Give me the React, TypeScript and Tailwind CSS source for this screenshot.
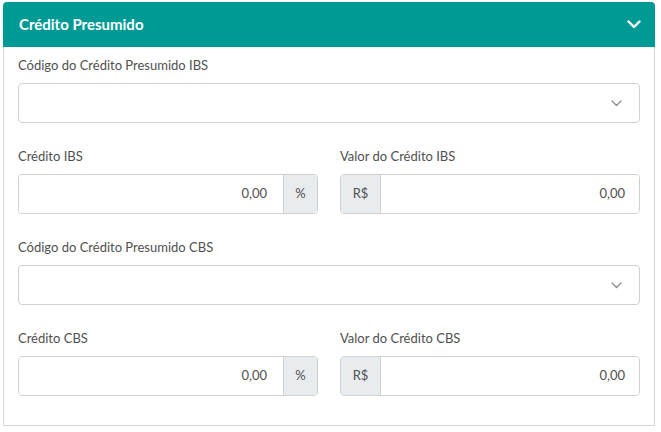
import React from 'react';

const font = { fontFamily: 'Lato, "Open Sans", sans-serif' };

function SelectChevron() {
  return (
    <svg width="11" height="7" viewBox="0 0 11 7" fill="none" aria-hidden="true">
      <path d="M1 1l4.5 4.5L10 1" stroke="#8a8a8a" strokeWidth="1.3" strokeLinecap="round" strokeLinejoin="round" />
    </svg>
  );
}

function Field({ label, children }: { label: string; children: React.ReactNode }) {
  return (
    <div className="flex flex-col">
      <label className="h-[18px] text-[13px] leading-[18px] text-[#505050] mb-[9px]">{label}</label>
      {children}
    </div>
  );
}

function SelectBox() {
  return (
    <div className="h-[40px] rounded-[4px] border border-[#d0d0d0] bg-white flex items-center justify-end pr-[17px]">
      <SelectChevron />
    </div>
  );
}

function PercentInput() {
  return (
    <div className="h-[40px] flex rounded-[4px] border border-[#d0d0d0] overflow-hidden">
      <div className="flex-1 flex items-center justify-end pr-[16px] text-[13px] text-[#505050] bg-white">0,00</div>
      <div className="w-[34px] flex items-center justify-center border-l border-[#d0d0d0] bg-[#e9ecef] text-[13px] text-[#505050]">%</div>
    </div>
  );
}

function MoneyInput() {
  return (
    <div className="h-[40px] flex rounded-[4px] border border-[#d0d0d0] overflow-hidden">
      <div className="w-[40px] flex items-center justify-center border-r border-[#d0d0d0] bg-[#e9ecef] text-[13px] text-[#505050]">R$</div>
      <div className="flex-1 flex items-center justify-end pr-[14px] text-[13px] text-[#505050] bg-white">0,00</div>
    </div>
  );
}

export default function App() {
  return (
    <div className="w-[661px] h-[432px] bg-white pt-[2px] pl-[3px]" style={font}>
      <div className="w-[652px]">
        {/* Header */}
        <div className="h-[45px] bg-[#009a94] rounded-t-[4px] flex items-center justify-between pl-[16px] pr-[14px]">
          <span className="text-[15px] font-bold text-white">Crédito Presumido</span>
          <svg width="14" height="9" viewBox="0 0 14 9" fill="none" aria-hidden="true">
            <path d="M1.5 1.5l5.5 5.5 5.5-5.5" stroke="#ffffff" strokeWidth="2.4" strokeLinecap="round" strokeLinejoin="round" />
          </svg>
        </div>

        {/* Body */}
        <div className="border-x border-b border-[#d6d6d6] px-[14px] pt-[9px] pb-[29px] flex flex-col gap-[24px]">
          <Field label="Código do Crédito Presumido IBS">
            <SelectBox />
          </Field>
          <div className="grid grid-cols-2 gap-[22px]">
            <Field label="Crédito IBS">
              <PercentInput />
            </Field>
            <Field label="Valor do Crédito IBS">
              <MoneyInput />
            </Field>
          </div>
          <Field label="Código do Crédito Presumido CBS">
            <SelectBox />
          </Field>
          <div className="grid grid-cols-2 gap-[22px]">
            <Field label="Crédito CBS">
              <PercentInput />
            </Field>
            <Field label="Valor do Crédito CBS">
              <MoneyInput />
            </Field>
          </div>
        </div>
      </div>
    </div>
  );
}
